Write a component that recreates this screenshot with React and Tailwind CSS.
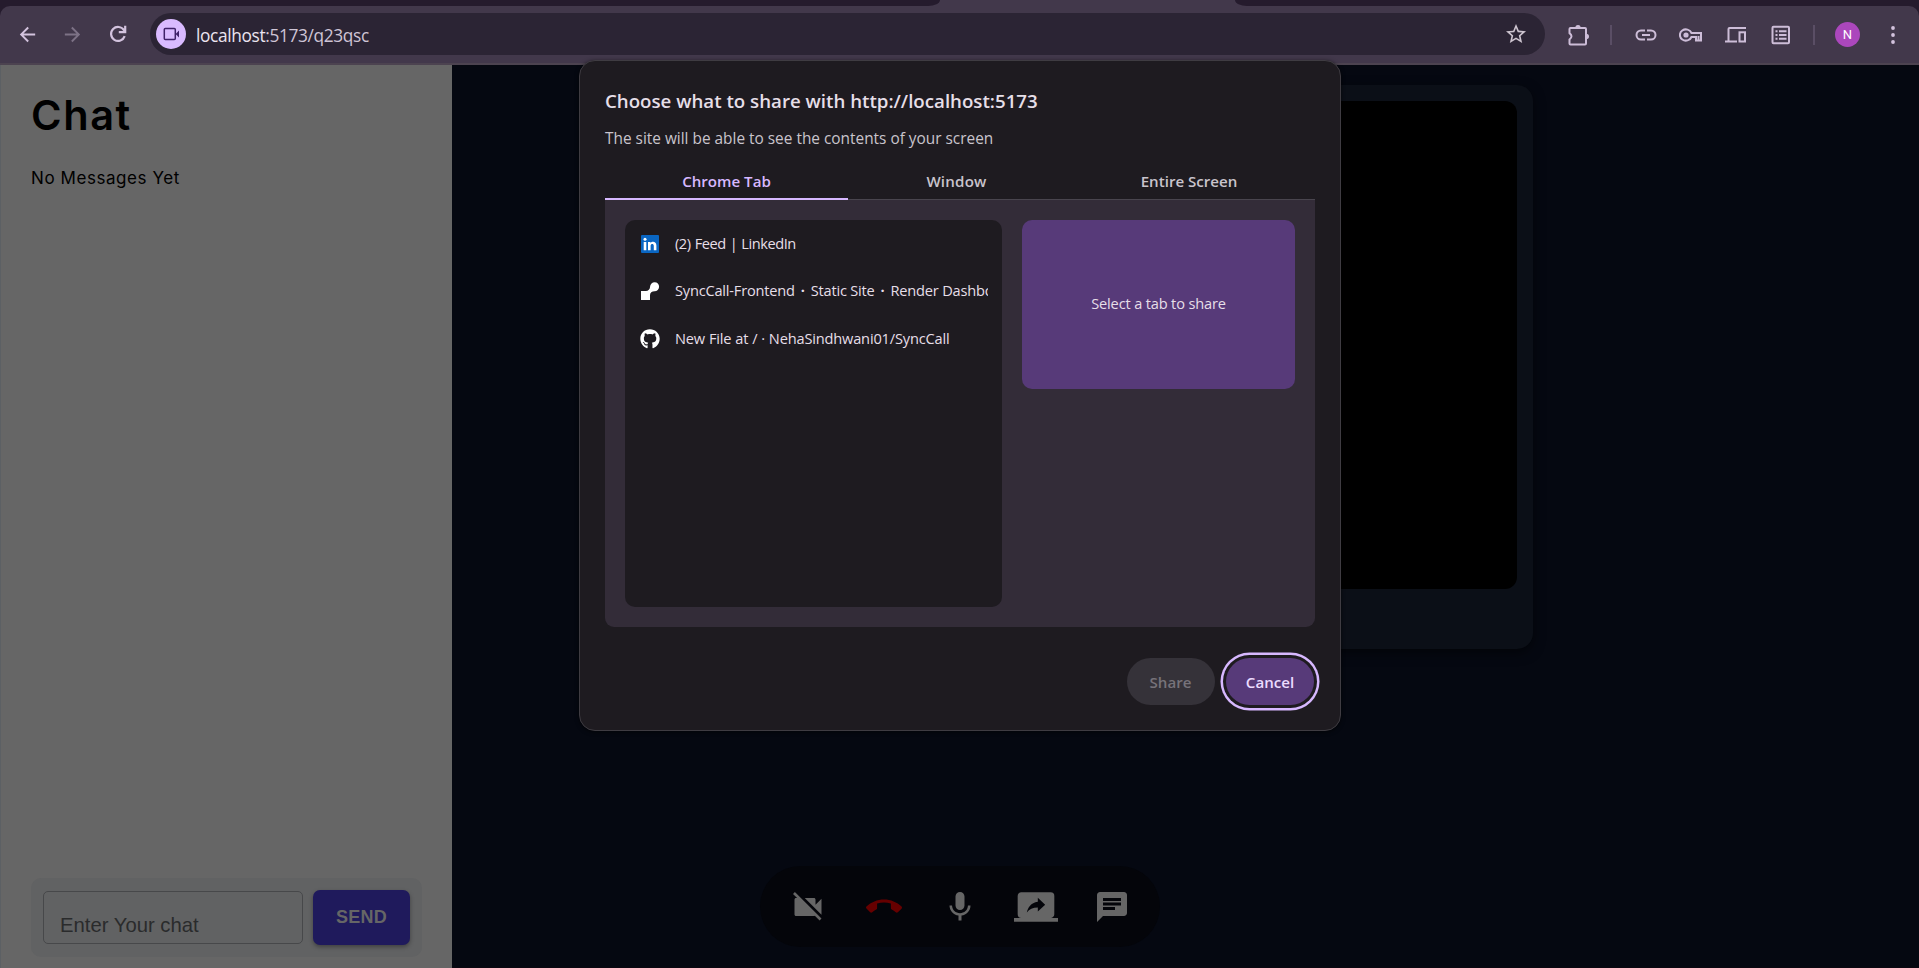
import React from "react";
import { MdVideocamOff, MdCallEnd, MdMic, MdScreenShare, MdChat, MdStarBorder, MdArrowBack, MdArrowForward } from "react-icons/md";
import { FaGithub } from "react-icons/fa";

function ToolIcon({ children }) {
  return (
    <svg viewBox="0 0 24 24" className="size-6 shrink-0" fill="none" stroke="#cdbdd8" strokeWidth="2">
      {children}
    </svg>
  );
}

function TabStrip() {
  return (
    <div className="flex h-1.5 bg-[#42384b]">
      <div className="w-[940px] rounded-br-[12px_6px] bg-[#251b2d]" />
      <div className="w-[295px]" />
      <div className="flex-1 rounded-bl-[12px_6px] bg-[#251b2d]" />
    </div>
  );
}

function Toolbar() {
  return (
    <div className="h-[59px] bg-[#251b2d]">
      <div className="flex h-full items-center rounded-t-[10px] border-b-2 border-[#4c4350] bg-[#42384b] pb-px">
        <div className="flex w-[150px] shrink-0 items-center text-[#d3c3de]">
          <MdArrowBack className="ml-[16px] size-[23px]" />
          <MdArrowForward className="ml-[22px] size-[23px] text-[#7d7286]" />
          <svg viewBox="0 0 24 24" className="ml-[22px] size-6" fill="none" stroke="currentColor" strokeWidth="2.2">
            <path d="M18.700 14.200A7 7 0 1 1 18 8.200L19 9.700M19.200 3.800v6.300h-6.400" />
          </svg>
        </div>
        <div className="flex h-[42px] w-[1395px] items-center rounded-full bg-[#2b2434] pr-[17px] pl-[6px]">
          <span className="flex size-[30px] items-center justify-center rounded-full bg-[#d9baff]">
            <svg viewBox="0 0 18 18" className="size-[18px]" fill="none" stroke="#3f2169" strokeWidth="1.5">
              <rect x="2.3" y="3.5" width="11" height="11" rx="1" />
              <path d="M17 5.5v7L13.6 9z" fill="#3f2169" stroke="none" />
            </svg>
          </span>
          <span className="ml-[10px] flex-1 pt-[3px] font-['Open_Sans',sans-serif] text-[17.300px] leading-6 tracking-[-0.350px] whitespace-nowrap text-[#cfc5d6]">
            <span className="text-[#ece4f0]">localhost</span>:5173/q23qsc
          </span>
          <MdStarBorder className="size-[24px] text-[#cdc4cf]" />
        </div>
        <div className="flex flex-1 items-center pt-px pl-[21px]">
          <ToolIcon>
            <path d="M4.500 5h14.500q1 0 1 1v14.500q0 1-1 1H4.500q-1 0-1-1V16.500q4-3.200 0-6.400V6q0-1 1-1z" />
            <path d="M9.300 5a2.700 3 0 0 1 5.400 0zM20 10.800a3 2.700 0 0 1 0 5.400z" fill="#cdbdd8" stroke="none" />
          </ToolIcon>
          <span className="ml-[20px] h-5 w-0.5 bg-[#5a4e65]" />
          <span className="ml-[22px]">
            <ToolIcon>
              <path d="M11 7.500H7a4.500 4.500 0 0 0 0 9h4M13 7.500h4a4.500 4.500 0 0 1 0 9h-4M8 12h8" />
            </ToolIcon>
          </span>
          <span className="ml-[21px]">
            <ToolIcon>
              <path d="M12.500 10a6 5.600 0 1 0 0 4H17v3.500h5V10z" />
              <circle cx="7" cy="12" r="2.600" fill="#cdbdd8" stroke="none" />
              <path d="M19.500 13v4" />
            </ToolIcon>
          </span>
          <span className="ml-[21px]">
            <ToolIcon>
              <path d="M4.500 18V6q0-1 1-1H22M1 18.500h12" />
              <rect x="15.500" y="9.300" width="5.500" height="9.200" />
            </ToolIcon>
          </span>
          <span className="ml-[21px]">
            <ToolIcon>
              <rect x="3.500" y="3.800" width="16.500" height="16.500" rx="1" />
              <path d="M6.500 8.200h2M10 8.200h7.500M6.500 12h2M10 12h7.500M6.500 15.800h2M10 15.800h7.500" strokeWidth="1.900" />
            </ToolIcon>
          </span>
          <span className="ml-[20px] h-5 w-0.5 bg-[#5a4e65]" />
          <span className="ml-[20px] flex size-[25px] items-center justify-center rounded-full bg-[#ab47bc] font-['Roboto',sans-serif] text-[13px] text-white">
            N
          </span>
          <svg viewBox="0 0 4 18" className="ml-[31px] h-[18px] w-1" fill="#d3c3de">
            <circle cx="2" cy="2" r="1.900" />
            <circle cx="2" cy="9" r="1.900" />
            <circle cx="2" cy="16" r="1.900" />
          </svg>
        </div>
      </div>
    </div>
  );
}

function ChatPanel() {
  return (
    <aside className="flex w-[452px] shrink-0 flex-col border-l border-[#5c6064] bg-[#666666] px-[30px] pt-[20px] pb-[11px] text-black">
      <h1 className="font-['Inter',sans-serif] text-[41.500px] leading-[60px] font-semibold tracking-[1.600px]">Chat</h1>
      <p className="mt-[21px] font-['Inter',sans-serif] text-[17px] leading-6 tracking-[0.570px]">No Messages Yet</p>
      <div className="mt-auto flex h-[79px] w-[391px] items-center rounded-[10px] bg-[#616263] px-3">
        <div className="flex h-[53px] w-[260px] items-end rounded-[5px] border border-[#47484a] pl-[16px] font-['Liberation_Sans',Arial,sans-serif] text-[20.300px] leading-[36px] whitespace-nowrap text-[#2a2b2c]">
          Enter Your chat
        </div>
        <button className="ml-[10px] flex h-[55px] w-[97px] items-center justify-center rounded-[7px] bg-[#1f1a5c] font-['Liberation_Sans',Arial,sans-serif] text-[18px] font-bold tracking-[0.200px] text-[#666666] shadow-[0_2px_4px_rgba(0,0,0,0.35)]">
          SEND
        </button>
      </div>
    </aside>
  );
}

function CallArea() {
  return (
    <main className="flex flex-1 flex-col bg-[#050811] pt-5">
      <div className="ml-[386px] h-[564px] w-[695px] rounded-[16px] bg-[#0b0f17] p-4 shadow-[0_4px_12px_rgba(0,0,0,0.500)]">
        <div className="h-[488px] rounded-[12px] bg-black" />
      </div>
      <div className="mt-auto mb-[20px] ml-[308px] flex h-[81px] w-[400px] items-center rounded-full bg-[#04050a] pl-[30px] text-[#666666]">
        <MdVideocamOff className="size-9" />
        <MdCallEnd className="ml-10 size-9 text-[#660000]" />
        <MdMic className="ml-10 size-9" />
        <MdScreenShare className="ml-9 size-11" />
        <MdChat className="ml-9 size-9" />
      </div>
      <div className="h-px bg-[#0b0710]" />
    </main>
  );
}

function LinkedInIcon() {
  return (
    <svg viewBox="0 0 20 20" className="size-5 shrink-0">
      <rect x="1" y="1" width="18" height="18" rx="1" fill="#0a66c2" />
      <circle cx="5" cy="5.300" r="1.500" fill="#fff" />
      <path d="M3.700 7.900h2.600v8.300H3.700zM8 7.900h2.500v1.200c1.400-2.300 5.900-1.900 5.900 2.300v4.800h-2.600v-4.300c0-2.600-3.200-2.400-3.200 0v4.300H8z" fill="#fff" />
    </svg>
  );
}

function RenderIcon() {
  return (
    <svg viewBox="0 0 20 20" className="size-5 shrink-0" fill="#fff">
      <path d="M1 10h4.800c2.500 0 4.200-1.600 4.300-4.500a4.500 4.500 0 1 1 4.500 4.700c-2.700 0-4.600 1.500-4.600 4V19H1z" />
    </svg>
  );
}

function Dialog() {
  return (
    <section className="absolute top-[60px] left-[579px] flex h-[671px] w-[762px] flex-col rounded-[16px] border border-[#3f3c42] bg-[#1e1b20] px-[25px] pt-[26px] font-['Open_Sans',sans-serif] text-[#e6dfe8] shadow-[0_1px_4px_rgba(0,0,0,0.600)]">
      <h2 className="text-[18.700px] leading-7 font-semibold whitespace-nowrap">Choose what to share with http://localhost:5173</h2>
      <p className="mt-[13px] text-[15.400px] leading-[22px] whitespace-nowrap text-[#c9c4cc]">
        The site will be able to see the contents of your screen
      </p>
      <div className="mt-[13px] flex h-[37px] text-[15.100px] font-semibold text-[#c9c4cc]">
        <div className="flex w-[243px] items-center justify-center border-b-2 border-[#d7b8ff] pt-[2px] text-[#d7b8ff]">Chrome Tab</div>
        <div className="flex w-[217px] items-center justify-center border-b border-[#49454e]">
          <span className="tracking-[0.200px]">Window</span>
        </div>
        <div className="flex w-[250px] items-center justify-center border-b border-[#49454e] pr-[2px]">Entire Screen</div>
      </div>
      <div className="flex h-[427px] w-[710px] items-start gap-5 rounded-b-[9px] bg-[#332c38] p-5">
        <div className="h-[387px] w-[377px] rounded-[10px] bg-[#1e1b20] pr-[14px] pl-[15px] text-[14.600px]">
          <div className="flex h-[47.500px] items-center gap-[15px]">
            <LinkedInIcon />
            <span className="overflow-hidden tracking-[-0.450px] [word-spacing:0.700px] whitespace-nowrap">(2) Feed | LinkedIn</span>
          </div>
          <div className="flex h-[47.500px] items-center gap-[15px]">
            <RenderIcon />
            <span className="overflow-hidden tracking-[-0.200px] whitespace-nowrap">
              SyncCall-Frontend<span className="px-[6px] font-bold">·</span>Static Site<span className="px-[6px] font-bold">·</span>Render Dashboard
            </span>
          </div>
          <div className="flex h-[47.500px] items-center gap-[15px]">
            <FaGithub className="size-5 shrink-0 text-white" />
            <span className="overflow-hidden tracking-[-0.170px] [word-spacing:0.300px] whitespace-nowrap">New File at / · NehaSindhwani01/SyncCall</span>
          </div>
        </div>
        <div className="flex h-[169px] w-[273px] items-center justify-center rounded-[10px] bg-[#573a79] pb-0.5 text-[14.600px] tracking-[-0.160px]">
          Select a tab to share
        </div>
      </div>
      <div className="mt-[31px] flex w-[710px] justify-end gap-[11px] pr-px text-[15.100px] font-semibold">
        <button className="h-[47px] w-[88px] rounded-full bg-[#353239] pt-px pr-px text-[#77737a]">Share</button>
        <button className="h-[47px] w-[88px] rounded-full bg-[#573a79] pt-px text-[#ecdcff] shadow-[0_0_0_3px_#1e1b20,0_0_0_5.500px_#d7b8ff]">
          Cancel
        </button>
      </div>
    </section>
  );
}

export default function App() {
  return (
    <div className="relative flex h-[968px] w-[1919px] flex-col overflow-hidden bg-[#050811]">
      <TabStrip />
      <Toolbar />
      <div className="flex flex-1">
        <ChatPanel />
        <CallArea />
      </div>
      <Dialog />
    </div>
  );
}
